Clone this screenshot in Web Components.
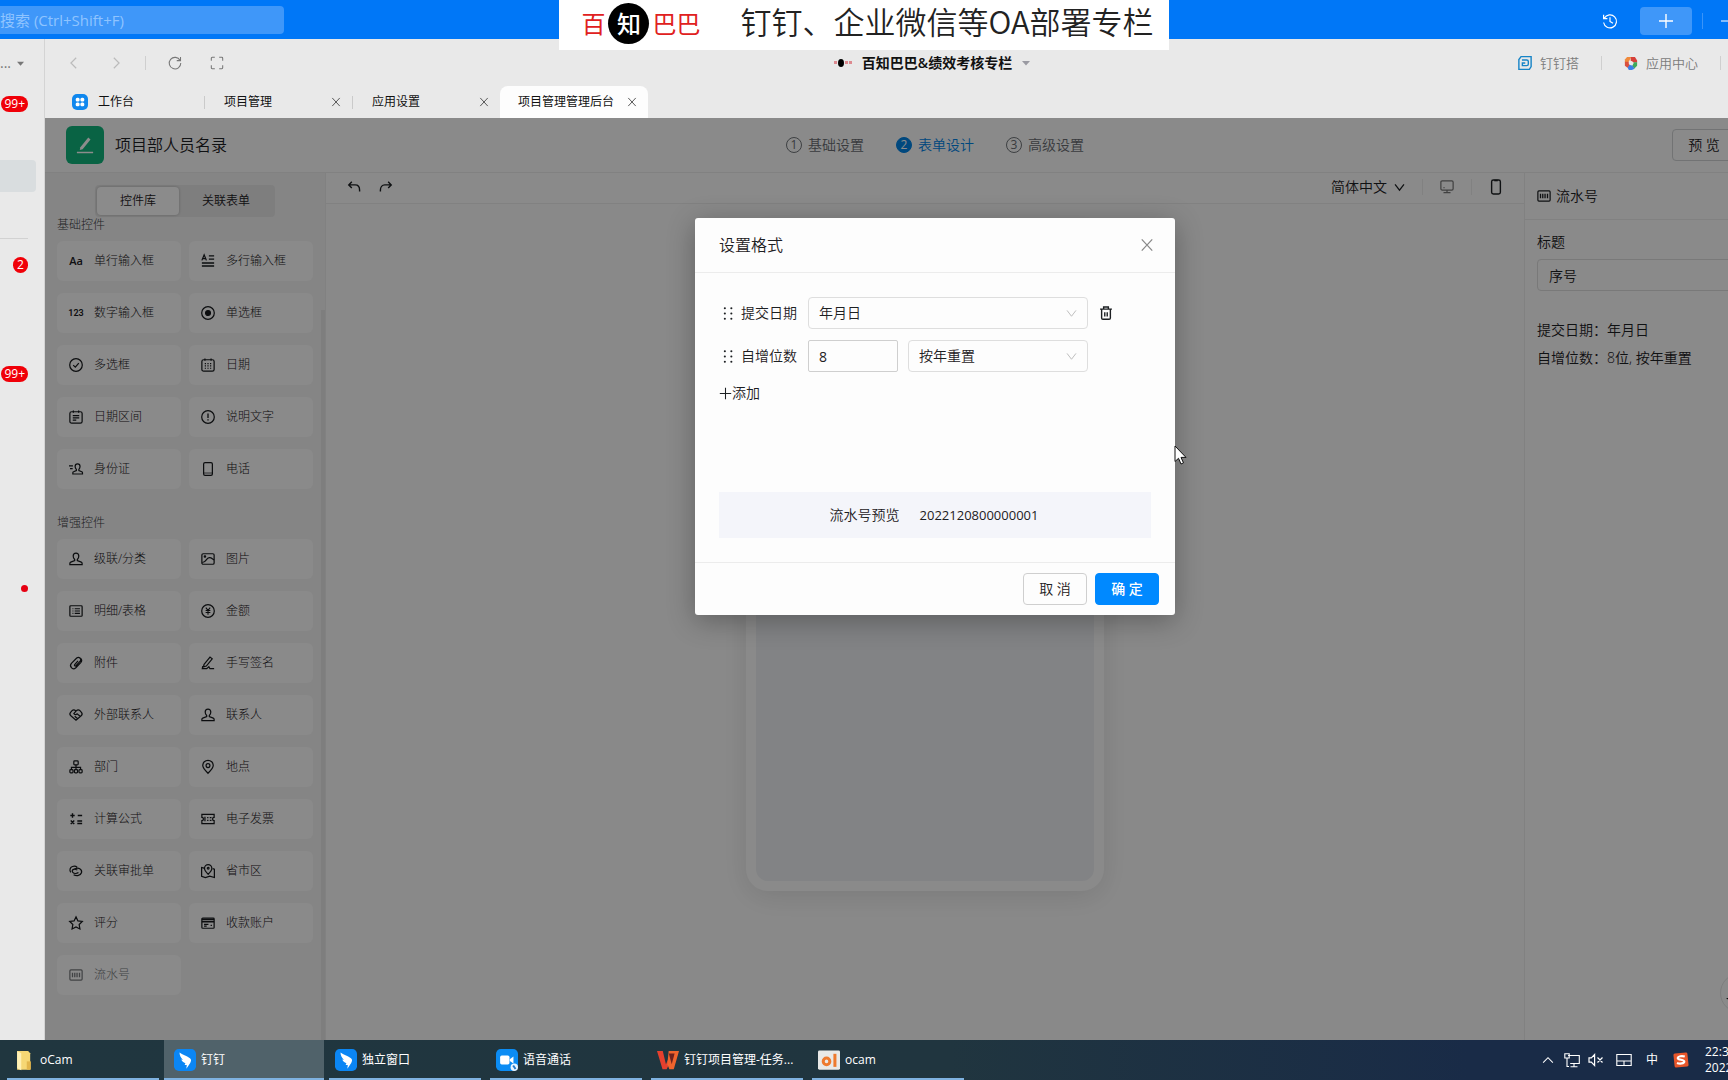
<!DOCTYPE html>
<html lang="zh-CN">
<head>
<meta charset="utf-8">
<title>项目管理管理后台</title>
<style>
html,body{margin:0;height:100%;overflow:hidden}
body{font-family:"Open Sans","Noto Sans CJK SC",sans-serif;font-size:14px;line-height:20px;color:#1d2023}
</style>
</head>
<body>
<app-shell></app-shell>
<script>
const BASE = `*,:host{box-sizing:border-box}button,input,select{font:inherit;color:inherit;margin:0;padding:0;border:0;background:none;outline:0}button{cursor:pointer}h1,h2,h3,p,ul{margin:0;padding:0;font:inherit;list-style:none}a{color:inherit;text-decoration:none}`;
function define(name, css, html) {
  customElements.define(name, class extends HTMLElement {
    constructor() {
      super();
      const t = document.createElement('template');
      t.innerHTML = `<style>${BASE}${css}</style>${typeof html === 'function' ? html(this) : html}`;
      this.attachShadow({mode: 'open'}).append(t.content.cloneNode(true));
    }
  });
}

const person = '<path d="M8 1.2c-2 0-3.2 1.4-3.2 3.4 0 1.7.7 3 1.7 4v1.2L2 11.6c-.7.3-1 .8-1 1.5v1.3h14v-1.3c0-.7-.3-1.2-1-1.5L9.500 9.800V8.600c1-1 1.700-2.300 1.700-4C11.200 2.600 10 1.200 8 1.200z"/>';
const serial = '<rect x="1" y="2.200" width="14" height="11.600" rx="1.200"/><path d="M4 5.500v5M6.600 5.500v5M9.200 5.500v5M12 5.500v5" stroke-width="1.500"/>';
const ICONS = {
  back:'<path d="M10.500 2l-6 6 6 6"/>',
  forward:'<path d="M5.500 2l6 6-6 6"/>',
  refresh:'<path d="M13.800 5A6.600 6.600 0 1 0 14.600 8M14.300 1v4.300H10"/>',
  expand:'<path d="M1.500 5.500v-3q0-1 1-1h3M10.500 1.500h3q1 0 1 1v3M14.500 10.500v3q0 1-1 1h-3M5.500 14.500h-3q-1 0-1-1v-3"/>',
  close:'<path d="M2 1.500l12 13M14 1.500l-12 13"/>',
  down:'<path d="M1.500 3.500L8 12l6.500-8.500"/>',
  up:'<path d="M1.500 11.500L8 5l6.500 6.500"/>',
  plus:'<path d="M8 1v14M1 8h14"/>',
  minus:'<path d="M1 8h14"/>',
  history:'<path d="M2.300 5.200A6.500 6.500 0 1 1 1.600 9.500M1.600 1.800v3.800h3.800M8 4.200v4.200l3 1.800"/>',
  undo:'<path d="M5.500 2L2 5.600l3.500 3.600M2.400 5.600h7c3 0 5 2.400 5 6v1.600"/>',
  redo:'<path d="M10.500 2L14 5.600l-3.500 3.600M13.600 5.600h-7c-3 0-5 2.400-5 6v1.600"/>',
  monitor:'<rect x="1" y="1" width="14" height="10.500" rx="1.500"/><path d="M8 11.500v2.800M4 14.500h8"/><path d="M4 8.800h1.200"/>',
  phone:'<rect x="3" y=".6" width="10" height="14.800" rx="1.600"/><path d="M3.300 12.600h9.400" stroke-width=".8"/>',
  mobile:'<rect x="3" y="0" width="10" height="16" rx="2"/><path d="M6 .6h4" stroke-width="1.800"/>',
  pen:'<path d="M4.300 9.800L10.600 2l1.800 1.500-6.300 7.800-2.300.7z" fill="currentColor" stroke="none"/><path d="M1.500 14h13" stroke-width="1.200"/>',
  serial,
  para:'<path d="M1 7.300L3.600 1l2.600 6.300M2 5.200h3.200M9 2.200h6M9 5.800h6"/><path d="M1 10.200h14M1 13.700h14" stroke-width="1.700"/>',
  radio:'<circle cx="8" cy="8" r="7.200"/><circle cx="8" cy="8" r="2.800" fill="currentColor"/>',
  check:'<circle cx="8" cy="8" r="7.200"/><path d="M4.800 8.200l2.400 2.300 4-4.700"/>',
  calendar:'<rect x="1" y="2" width="14" height="13" rx="2"/><path d="M4.500 .5v2.600M11.500 .5v2.600"/><path d="M4.300 6.400h1.400M7.300 6.400h1.400M10.300 6.400h1.400M4.300 9h1.400M7.300 9h1.400M10.300 9h1.400M4.300 11.700h1.400M7.300 11.700h1.400M10.300 11.700h1.400" stroke-width="1.200"/>',
  range:'<rect x="1" y="2" width="14" height="13" rx="2"/><path d="M5 .5v2.600M11 .5v2.600M4.300 6.500h7.400M4.300 9h7.400M4.300 11.600h4"/>',
  info:'<circle cx="8" cy="8" r="7.200"/><path d="M8 4v5M8 10.600v1.500" stroke-width="1.500"/>',
  idcard:'<path d="M0 4.500h4.500M1.200 7.500h3M9.800 2.200c-1.700 0-2.800 1.200-2.800 2.900 0 1.400.5 2.500 1.400 3.300v1.300l-3.200 1.400c-.5.200-.8.600-.8 1.200v1.400h11v-1.400c0-.6-.3-1-.8-1.200l-3.300-1.400V8.400c.8-.8 1.300-1.900 1.300-3.300 0-1.700-1.100-2.900-2.800-2.900z"/>',
  person,
  image:'<rect x="1" y="2" width="14" height="12" rx="1.500"/><path d="M1.500 12c5-.5 4-5 8-5.500 2.500-.2 3.500 1.500 5.500 2.500"/><circle cx="4.500" cy="5.200" r=".8" fill="currentColor"/>',
  list:'<rect x="1" y="2" width="14" height="12" rx="1"/><path d="M4 5.400h1M6.500 5.400h6M4 8h1M6.500 8h6M4 10.700h1M6.500 10.700h6" stroke-width="1.200"/>',
  money:'<circle cx="8" cy="8" r="7.200"/><path d="M5.500 4.200L8 7.300l2.500-3.100M5.300 7.500h5.400M5.300 9.700h5.400M8 7.300v5" stroke-width="1.200"/>',
  clip:'<path d="M10.300 5.500L6.500 9.800c-.8 1 .5 2.200 1.500 1.300l4.800-5.300c2-2.300-1.300-5.800-4-3.500L3 8.200c-3.300 3.500 1 8.500 4.800 5.200l5.600-5.900c1.200-1.400 1.200-3.500 0-4.700"/>',
  sign:'<path d="M3.500 9.500L10.300 1.200l2.500 2-6.700 8.300-3.300 1zM2 11.500L1.500 14.500h5l2.500-2.200 1.200 2.200H15"/>',
  shake:'<path d="M8 3.500C6 1.500 4.500 2 3.500 3L1.800 5C.8 6.200.7 7.500 1.800 8.600L8 14l6.200-5.400c1.100-1.100 1-2.400 0-3.600l-1.700-2c-1-1-2.500-1.500-4.500.5L5.500 6.300c.8 1.700 2.600 1.600 3.700.3l3.900 3.100M6.500 9.500l3.500 2.700"/>',
  org:'<rect x="5.500" y="1" width="5" height="4.500" rx="1"/><path d="M8 5.500v3M2.800 11V8.500h10.400V11M8 8.500V11"/><rect x="1" y="11" width="3.600" height="3.600" rx="1"/><rect x="6.200" y="11" width="3.600" height="3.600" rx="1"/><rect x="11.400" y="11" width="3.600" height="3.600" rx="1"/>',
  pin:'<path d="M8 15.200C4.300 11.500 2 9 2 6.300a6 6 0 0 1 12 0C14 9 11.700 11.500 8 15.200z"/><circle cx="8" cy="6.400" r="2.200"/>',
  calc:'<path d="M4 1.500v5M1.500 4h5M10 4h5M2 9.800l4 4M6 9.800l-4 4M9.500 10.300h5.500M9.500 13.200h5.500" stroke-width="1.600"/>',
  ticket:'<path d="M1 2.800h14v3.400a1.800 1.800 0 0 0 0 3.600v3.400H1V9.800a1.800 1.800 0 0 0 0-3.600z"/><path d="M4.500 5.500v5M7 6.500h1.500M7 9.500h1.500M10 6.500h2M10 9.500h2"/>',
  link:'<path d="M10.800 9.800c-1.800 1.400-5 1.500-6.500-.2-1.700-2 .4-4.300 2.700-3.600l2.500.8M5 6.500c1.800-1.600 5.300-2.300 7.300-1 3.800 2.400 2.200 7.200-2.300 7.700-2 .2-3.700-.4-4.700-1M2 9.500C.3 7 1 4 4 2.900c2-.7 4-.3 5.300.8"/>',
  map:'<path d="M3.500 4.800L.7 4v10l4.300 1.500 5-1.500 5.300 1.500V6l-2-.7"/><path d="M8.200 11.700C5.500 9.100 4 7.200 4 4.900a4.200 4.200 0 0 1 8.400 0c0 2.300-1.500 4.200-4.200 6.800z"/><circle cx="8.200" cy="4.800" r="1"/>',
  star:'<path d="M8 1l2.200 4.600 5 .7-3.600 3.500.9 5L8 12.400l-4.500 2.400.9-5L.8 6.300l5-.7z"/>',
  card:'<rect x="1" y="2.500" width="14" height="11.500" rx="1"/><path d="M1 4h14M1 6.500h14" stroke-width="1.700"/><path d="M3.500 9.500h5M3.500 11.600h3M11 10.800h1.500"/>',
  trash:'<path d="M1.200 3.600h13.600M5.300 3.500V1.200h5.400v2.300M3 3.600v10q0 1.500 1.500 1.500h7q1.500 0 1.500-1.500v-10M6.600 7v5M9.400 7v5"/>',
  grip:'<g fill="currentColor" stroke="none"><circle cx="3.500" cy="1.500" r="1.300"/><circle cx="11.500" cy="1.500" r="1.300"/><circle cx="3.500" cy="8" r="1.300"/><circle cx="11.500" cy="8" r="1.300"/><circle cx="3.500" cy="14.500" r="1.300"/><circle cx="11.500" cy="14.500" r="1.300"/></g>',
  caret:'<path d="M0 4h16L8 13z" fill="currentColor" stroke="none"/>',
  grid:'<rect width="16" height="16" rx="5" fill="#0f87ee" stroke="none"/><g fill="#fff" stroke="none"><rect x="3.700" y="3.700" width="3.900" height="3.900" rx="1.500"/><rect x="8.400" y="3.700" width="3.900" height="3.900" rx="1.500"/><rect x="3.700" y="8.400" width="3.900" height="3.900" rx="1.500"/><rect x="8.400" y="8.400" width="3.900" height="3.900" rx="1.500"/></g>',
  dingda:'<path d="M3.500 .7h11.500v11.300l-2 3.300H1V4z" stroke="#1684c7" stroke-width="1.600"/><path d="M4.500 4.500h5.500q1.800 0 1.800 1.800v2.900q0 1.800-1.800 1.800H5V8h3.300" stroke="#1684c7" stroke-width="1.600"/>',
  center:'<g stroke="none"><path d="M3.500 1h5L5 7H1V4z" fill="#f08a3c"/><path d="M8 1h4.500L15 5v2.500h-4L7.500 5z" fill="#d6403a"/><path d="M15 7v4l-3.500 3.500L9.500 11l1.800-4z" fill="#3fa95b"/><path d="M12 14.500L9 16H5.500L4 13l2-3.500L9.800 11z" fill="#3d7fe8"/><path d="M1 6.500h4L6.500 10 4 13.500 1 11z" fill="#d9503f"/><circle cx="8" cy="8.300" r="2.400" fill="#e9e9e9"/></g>',
  folder:'<path d="M3 1.500h8l1.500 1.500v12H3z" fill="#f6d774" stroke="none"/><path d="M3 1.500l3 1.500v12.500L3 14z" fill="#fff0b5" stroke="none"/><path d="M10 9h3v6h-3z" fill="#e3b64c" stroke="none"/>',
  ding:'<rect width="16" height="16" rx="3.500" fill="#0b86f4" stroke="none"/><path d="M4 2.600c2.200 1.600 5 2.200 7.600 4.200 1.200 1 .9 2.100.2 3.300L9 14.300l.3-2.600H7.700l.6-1.400c-1.500-.3-2.500-1.300-3-2.600l1.200.2C5 6.700 4 4.700 4 2.600z" fill="#fff" stroke="none"/>',
  video:'<rect width="16" height="16" rx="3.500" fill="#0b8cf4" stroke="none"/><rect x="3" y="4.800" width="6.800" height="6.400" rx="1.200" fill="#fff" stroke="none"/><path d="M10 7.400l2.700-2v5.200L10 8.800z" fill="#fff" stroke="none"/><circle cx="13.300" cy="13.300" r="2.700" fill="#e8f4ff" stroke="none"/><path d="M12.500 12l1.700 2.500" stroke="#2279c9"/>',
  wps:'<g stroke="none"><path d="M0 1.500h4.200l2.300 9.500L10 3.300l1 3.500-4 8H4z" fill="#e5402e"/><path d="M8.500 1.500H16l-3.800 13.300H9L7.500 11z" fill="#f0642d"/><path d="M12.800 3.300L10.700 11 8.600 3.300z" fill="#6e211d"/></g>',
  ocam:'<rect x="0" y="1" width="16" height="14" rx="1" fill="#e9e9e7" stroke="none"/><circle cx="6.200" cy="9" r="2.400" stroke="#ee7a2e" stroke-width="2.200"/><path d="M12.300 3.500v9.500" stroke="#ee7a2e" stroke-width="2.200"/>',
  net:'<path d="M4 3.500h11.300v8H6.200M10 11.500v3M6.500 14.700h7M.8 1.800h4.400V6H.8zM3 6v8.500h2" stroke-width="1.100"/>',
  mute:'<path d="M1 5.800h2.300L6.600 2.500v11L3.300 10.200H1zM9.500 5.500l5 5M14.500 5.500l-5 5" stroke-width="1.200"/>',
  pad:'<path d="M.8 2.500h14.400v11H.8zM.8 9h14.400M8 9v4.500" stroke-width="1.100"/>',
  sogou:'<rect x="1" y="1" width="14" height="14" rx="1.500" fill="#e8562a" stroke="none" transform="rotate(-6 8 8)"/><path d="M11.800 4.500c-3-.9-6.800-.2-7 1.500-.2 2.200 6.700 1.300 6.500 3.600-.2 2-4.500 2.500-7.300 1.300" stroke="#fff" stroke-width="2.200"/>'
};
define('ui-icon',
  ':host{display:inline-flex;flex:none;width:14px;height:14px}svg{display:block;width:100%;height:100%;overflow:visible}',
  el => `<svg viewBox="0 0 16 16" fill="none" stroke="currentColor" stroke-width="${el.getAttribute('weight') || 1.4}" aria-hidden="true">${ICONS[el.getAttribute('name')] || ''}</svg>`);

define('promo-banner', `
:host{display:flex;align-items:center;width:fit-content;height:50px;padding:0 15px 4px 22px;background:#fff;color:#222;font-family:"Noto Sans CJK SC",sans-serif}
.logo{display:flex;align-items:center;gap:3px;color:#e02020;font-size:24px;line-height:40px}
.seal{display:flex;align-items:center;justify-content:center;width:41px;height:41px;border-radius:50%;background:#000;color:#fff;font-weight:500}
.name{margin-left:40px;padding-bottom:4px;font-size:31px;line-height:46px;font-weight:350;white-space:nowrap}`,
`<span class="logo"><span>百</span><span class="seal">知</span><span>巴巴</span></span><span class="name">钉钉、企业微信等OA部署专栏</span>`);

define('title-bar', `
:host{display:flex;align-items:center;height:39px;padding-right:89px;background:#0077f7;color:#fff}
input{width:284px;height:28px;border-radius:0 4px 4px 0;background:#3f97f9;font-size:15px}
input::placeholder{color:#8fc4ff;opacity:1}
.right{display:flex;align-items:center;margin-left:auto;padding-top:2px}
.add{display:flex;align-items:center;justify-content:center;width:52px;height:28px;margin:0 10px 0 22px;border-radius:4px;background:#3f97f9}
i{width:1px;height:16px;margin-right:17px;background:#3a94f8}
ui-icon{width:16px;height:16px}`,
`<input type="text" aria-label="搜索" placeholder="搜索 (Ctrl+Shift+F)">
<div class="right"><ui-icon name="history" weight="1.200"></ui-icon><button class="add" aria-label="新建"><ui-icon name="plus"></ui-icon></button><i></i><ui-icon name="minus" weight="1"></ui-icon></div>`);

define('side-rail', `
:host{display:flex;flex:none;flex-direction:column;align-items:flex-end;width:45px;padding-right:16px;background:#e9e9e9;border-right:1px solid #d4d4d4;overflow:hidden}
.org{display:flex;align-items:center;gap:6px;height:48px;padding-right:4px;color:#777;line-height:16px}
ui-icon{width:7px;height:7px}
.badge{flex:none;min-width:15px;height:16px;padding:0 3px;border-radius:8px;background:#f00008;color:#fff;font-size:12px;line-height:16px;text-align:center}
.apps{margin-top:9px}
.todo{margin-top:18px}
.chats{margin-top:93px}
.selected{flex:none;align-self:stretch;height:32px;margin:48px -8px 0 0;border-radius:0 4px 4px 0;background:#d9dddf}
.rule{flex:none;align-self:stretch;height:1px;margin-top:46px;background:#d2d2d2}
.dot{flex:none;width:7px;height:7px;margin-top:203px;border-radius:50%;background:#e60012}`,
`<div class="org"><span>...</span><ui-icon name="caret"></ui-icon></div>
<span class="badge apps">99+</span><div class="selected"></div><div class="rule"></div>
<span class="badge todo">2</span><span class="badge chats">99+</span><span class="dot"></span>`);

define('window-nav', `
:host{display:grid;grid-template-columns:1fr auto 1fr;align-items:center;height:47px;background:#e9e9e9;color:#7b7b7b}
div{display:flex;align-items:center}
.tools{padding-left:22px;color:#777}
.tools button{display:flex;width:14px;height:14px}
.tools button[disabled]{color:#bbb}
i{width:1px;height:14px;background:#cfcfcf}
.title{gap:10px;padding-right:6px;color:#111;font-weight:600}
.mini{display:flex;align-items:center;gap:1px;width:18px}
.mini b{width:3px;height:3px;background:#dd8a90}.mini s{width:6px;height:8px;border-radius:50%;background:#000}
.title ui-icon{width:8px;height:8px;color:#9a9aa2}
.links{justify-content:flex-end;padding-right:104px;font-size:13px;font-weight:350}
.links a{display:flex;align-items:center;gap:8px}`,
`<div class="tools"><button disabled aria-label="后退"><ui-icon name="back"></ui-icon></button><button disabled aria-label="前进" style="margin-left:28px"><ui-icon name="forward"></ui-icon></button><i style="margin:0 22px"></i><button aria-label="刷新"><ui-icon name="refresh" weight="1.200"></ui-icon></button><button aria-label="全屏" style="margin-left:28px"><ui-icon name="expand" weight="1.200"></ui-icon></button></div>
<div class="title"><span class="mini"><b></b><s></s><b></b><b></b></span><span>百知巴巴&amp;绩效考核专栏</span><ui-icon name="caret"></ui-icon></div>
<div class="links"><a href="#"><ui-icon name="dingda"></ui-icon>钉钉搭</a><i style="margin:0 22px"></i><a href="#"><ui-icon name="center"></ui-icon>应用中心</a><i style="margin-left:22px"></i></div>`);

define('tab-item', `
:host{display:flex;align-items:center;flex:none;width:148px;height:32px;padding:0 11px 0 20px;font-size:12px;color:#111}
:host([home]){width:159px;padding-left:27px}
:host([active]){padding-left:18px;background:#fdfdfd;border-radius:8px 8px 0 0}
button{display:flex;margin-left:auto}
a{display:flex;align-items:center;gap:10px;white-space:nowrap}
button ui-icon{width:10px;height:10px;color:#444}
a ui-icon{width:16px;height:16px}`,
el => `<a href="#">${el.hasAttribute('home') ? '<ui-icon name="grid"></ui-icon>' : ''}<slot></slot></a>${el.hasAttribute('home') ? '' : '<button aria-label="关闭标签"><ui-icon name="close" weight="1.400"></ui-icon></button>'}`);

define('tab-strip', `
:host{display:flex;align-items:center;height:32px;background:#e9e9e9}
i{flex:none;width:1px;height:13px;margin-right:-1px;background:#cacaca}`,
`<tab-item home>工作台</tab-item><i></i><tab-item>项目管理</tab-item><i></i><tab-item>应用设置</tab-item><tab-item active>项目管理管理后台</tab-item>`);

define('form-header', `
:host{display:grid;grid-template-columns:1fr auto 1fr;align-items:center;flex:none;height:55px;background:#fbfbfb;border-bottom:1px solid #ececec}
.name{display:flex;align-items:center;gap:11px;padding-left:21px;font-size:16px}
.mark{display:flex;align-items:center;justify-content:center;width:38px;height:38px;border-radius:6px;background:#12b57c;color:#fff}
.mark ui-icon{width:20px;height:20px}
ol{display:flex;gap:32px;margin:0;padding:0;list-style:none;color:#686c71}
li{display:flex;align-items:center;gap:6px}
li span{width:16px;height:16px;border:1px solid #71757a;border-radius:50%;font-size:12px;font-weight:400;line-height:14px;text-align:center}
li.on{color:#0083e6}li.on span{border-color:#0083e6;background:#0083e6;color:#fff}
button{justify-self:end;width:64px;height:32px;margin-right:89px;border:1px solid #cfd1d3;border-radius:4px;white-space:nowrap}`,
`<div class="name"><span class="mark"><ui-icon name="pen"></ui-icon></span><h1>项目部人员名录</h1></div>
<ol><li><span>1</span>基础设置</li><li class="on"><span>2</span>表单设计</li><li><span>3</span>高级设置</li></ol>
<button>预 览</button>`);

define('palette-item', `
:host{display:block}
button{display:flex;align-items:center;gap:11px;width:100%;height:40px;padding-left:12px;border-radius:6px;background:#fbfbfb;font-size:12px;font-weight:300;color:#1c2024;text-align:left}
ui-icon{color:#16191c}
:host([used]) button{color:#777a7d}
:host([used]) ui-icon{color:#777a7d}
em{flex:none;width:14px;font-style:normal;font-size:11px;font-weight:600;line-height:14px;display:flex;justify-content:center;white-space:nowrap}
em.num{font-size:9px;font-family:Roboto,sans-serif}`,
el => {
  const k = el.getAttribute('icon');
  const icon = k === 'aa' ? '<em>Aa</em>' : k === '123' ? '<em class="num">123</em>' : `<ui-icon name="${k}"></ui-icon>`;
  return `<button${el.hasAttribute('used') ? ' disabled' : ''}>${icon}<slot></slot></button>`;
});

define('palette-group', `
:host{display:block}
h3{margin-bottom:8px;font-size:12px;line-height:16px;font-weight:300;color:#3c4044}
div{display:grid;grid-template-columns:1fr 1fr;gap:12px 8px}`,
el => `<h3>${el.getAttribute('heading')}</h3><div><slot></slot></div>`);

const group = items => items.map(([i, t, u]) => `<palette-item icon="${i}"${u ? ' used' : ''}>${t}</palette-item>`).join('');
define('control-palette', `
:host{position:relative;display:flex;flex:none;flex-direction:column;width:281px;padding:12px 12px 0;background:#f3f3f3;border-right:1px solid #ebebeb;overflow:hidden}
.seg{display:flex;align-self:center;height:32px;padding:2px;border-radius:4px;background:#e6e6e6}
.seg button{padding:0 23px;border-radius:4px;font-size:12px}
.seg .on{background:#fdfdfd;box-shadow:0 0 3px rgba(0,0,0,.25)}
palette-group+palette-group{margin-top:26px}
.thumb{position:absolute;right:0;top:137px;bottom:0;width:4px;background:#e5e5e5}`,
`<div class="seg"><button class="on">控件库</button><button>关联表单</button></div>
<palette-group heading="基础控件">${group([['aa','单行输入框'],['para','多行输入框'],['123','数字输入框'],['radio','单选框'],['check','多选框'],['calendar','日期'],['range','日期区间'],['info','说明文字'],['idcard','身份证'],['phone','电话']])}</palette-group>
<palette-group heading="增强控件">${group([['person','级联/分类'],['image','图片'],['list','明细/表格'],['money','金额'],['clip','附件'],['sign','手写签名'],['shake','外部联系人'],['person','联系人'],['org','部门'],['pin','地点'],['calc','计算公式'],['ticket','电子发票'],['link','关联审批单'],['map','省市区'],['star','评分'],['card','收款账户'],['serial','流水号',1]])}</palette-group>
<span class="thumb"></span>`);

define('pick-list', `
:host{display:grid;align-items:center;color:#1d2023}
select{grid-area:1/1;width:100%;height:100%;padding:0 10px;appearance:none;border:1px solid #dedede;border-radius:4px}
ui-icon{grid-area:1/1;justify-self:end;width:11px;height:11px;margin-right:11px;color:#bbb;pointer-events:none}
:host([plain]) select{border:0;padding:0}:host([plain]) ui-icon{margin-right:0;color:#1d2023}`,
el => `<select aria-label="${el.getAttribute('label')}"><option>${el.getAttribute('value')}</option></select><ui-icon name="down" weight="${el.hasAttribute('plain') ? 1.8 : 1.4}"></ui-icon>`);

define('design-canvas', `
:host{display:flex;flex:1;flex-direction:column;min-width:0;background:#fafafa}
.bar{display:flex;align-items:center;flex:none;height:31px;padding:0 21px 2px;background:#fbfbfb;border-bottom:1px solid #ececec}
.bar button{display:flex}
.bar pick-list{width:74px;height:28px;margin-left:auto}
i{width:1px;height:16px;margin:0 17px;background:#ebebeb}
.stage{display:flex;flex:1;justify-content:center;padding:24px 0 149px}
.phone{width:358px;border:10px solid #fbfbfb;border-radius:22px;background:#edeff2;box-shadow:0 6px 28px rgba(0,0,0,.1)}`,
`<div class="bar"><button aria-label="撤销"><ui-icon name="undo" weight="1.600"></ui-icon></button><button aria-label="重做" style="margin-left:18px"><ui-icon name="redo" weight="1.600"></ui-icon></button>
<pick-list plain label="语言" value="简体中文"></pick-list><i></i><button aria-label="电脑预览" style="color:#777"><ui-icon name="monitor"></ui-icon></button><i></i><button aria-label="手机预览"><ui-icon name="mobile" weight="1.600"></ui-icon></button></div>
<div class="stage"><div class="phone"></div></div>`);

define('property-panel', `
:host{display:flex;flex:none;flex-direction:column;width:301px;background:#fbfbfb;border-left:1px solid #ececec}
h2{display:flex;align-items:center;gap:5px;height:47px;padding-left:12px;border-bottom:1px solid #ececec}
.body{display:flex;flex-direction:column;padding:12px}
label{margin-bottom:7px}
input{height:32px;padding:0 11px;border:1px solid #dcdcdc;border-radius:4px;margin-bottom:25px}
p{line-height:28px}`,
`<h2><ui-icon name="serial"></ui-icon>流水号</h2>
<div class="body"><label for="t">标题</label><input id="t" type="text" value="序号"><p>提交日期：年月日</p><p>自增位数：8位, 按年重置</p></div>`);

define('format-dialog', `
:host{display:block;width:480px;height:fit-content;background:#fdfdfd;border-radius:3px;box-shadow:0 6px 28px rgba(0,0,0,.3);color:#1d2023}
header{display:flex;align-items:center;justify-content:space-between;height:55px;padding:0 21px 0 24px;border-bottom:1px solid #ececec}
h2{font-size:16px}
button{display:flex;align-items:center;justify-content:center}
header button{color:#888}
.body{padding:24px}
.rows{display:flex;flex-direction:column;gap:11px;min-height:195px}
.row{display:flex;align-items:center;height:32px;padding-left:3px}
.row label{margin:0 11px 0 6px}
.row>ui-icon{width:13px;height:13px}
.row button{margin-left:11px}
.wide{width:280px;height:32px}.half{width:180px;height:32px;margin-left:10px}
input{width:90px;height:32px;padding:0 10px;border:1px solid #cfcfcf;border-radius:2px;font-weight:400}
.add{align-self:flex-start}
.add ui-icon{width:13px;height:13px}
.preview{display:flex;align-items:center;justify-content:center;gap:20px;height:46px;padding-right:2px;background:#f4f5fa}
.preview output{font-size:13px;font-weight:400}
footer{display:flex;justify-content:flex-end;gap:8px;padding:10px 16px;border-top:1px solid #ececec}
footer button{width:64px;height:32px;border:1px solid #cfcfcf;border-radius:4px}
footer .ok{background:#0089ff;border-color:#0089ff;color:#fff;font-weight:500}`,
`<header><h2>设置格式</h2><button aria-label="关闭"><ui-icon name="close"></ui-icon></button></header>
<div class="body"><div class="rows">
<div class="row"><ui-icon name="grip"></ui-icon><label>提交日期</label><pick-list class="wide" label="提交日期" value="年月日"></pick-list><button aria-label="删除"><ui-icon name="trash" weight="1.600"></ui-icon></button></div>
<div class="row"><ui-icon name="grip"></ui-icon><label for="n">自增位数</label><input id="n" type="text" value="8"><pick-list class="half" label="重置周期" value="按年重置"></pick-list></div>
<button class="add"><ui-icon name="plus" weight="1.300"></ui-icon>添加</button></div>
<div class="preview"><span>流水号预览</span><output>2022120800000001</output></div></div>
<footer><button>取 消</button><button class="ok">确 定</button></footer>`);

define('form-page', `
:host{position:relative;display:flex;flex:1;flex-direction:column;min-height:0;font-weight:350}
.cols{display:flex;flex:1;min-height:0}
.mask{position:absolute;inset:0;display:flex;justify-content:center;padding-top:100px;background:rgba(0,0,0,.45)}
.help{position:absolute;right:65px;bottom:27px;display:flex;align-items:center;width:40px;height:40px;padding-left:5px;border-radius:50%;border:1px solid #e4e4e4;background:#fbfbfb}
.cursor{position:absolute;left:1129px;top:327px;width:13px;height:20px}`,
`<form-header></form-header>
<div class="cols"><control-palette></control-palette><design-canvas></design-canvas><property-panel></property-panel></div>
<button class="help" aria-label="帮助"><svg width="8" height="8" viewBox="0 0 8 8" style="margin-top:16px"><path d="M0 1l8 0v6z" fill="#111"/></svg></button>
<div class="mask"><format-dialog></format-dialog></div>
<svg class="cursor" viewBox="0 0 13 20"><path d="M1 1v15.500l3.500-3.200 2.500 5.700 2.500-1.100-2.500-5.500h5z" fill="#fff" stroke="#111"/></svg>`);

define('task-item', `
:host{display:flex;flex:none;width:161px;padding:0 2px 0 0}
a{display:flex;flex:1;align-items:center;gap:5px;min-width:0;padding:0 8px 0 10px;background:linear-gradient(#7fb2e0,#7fb2e0) 4px 100%/calc(100% - 7px) 2px no-repeat;white-space:nowrap}
:host([active]){padding:0 1px 0 0}
:host([active]) a{background:linear-gradient(#7fb2e0,#7fb2e0) 0 100%/100% 2px no-repeat,#50626a}
ui-icon{width:22px;height:22px}`,
el => `<a href="#"><ui-icon name="${el.getAttribute('icon')}"></ui-icon><slot></slot></a>`);

define('task-bar', `
:host{display:flex;flex:none;height:40px;padding-left:3px;background:linear-gradient(90deg,#20363f 0,#20353f 55%,#192b47 85%);color:#fff;font-size:12px;line-height:16px;overflow:hidden}
.tray{display:flex;align-items:center;margin-left:auto}
.tray ui-icon{width:16px;height:16px}
.clock{width:23px;margin-left:16px;white-space:nowrap}`,
`<task-item icon="folder">oCam</task-item><task-item icon="ding" active>钉钉</task-item><task-item icon="ding">独立窗口</task-item><task-item icon="video">语音通话</task-item><task-item icon="wps">钉钉项目管理-任务...</task-item><task-item icon="ocam">ocam</task-item>
<div class="tray"><ui-icon name="up" style="width:12px;height:12px"></ui-icon><ui-icon name="net" style="margin-left:10px"></ui-icon><ui-icon name="mute" style="margin-left:8px"></ui-icon><ui-icon name="pad" style="margin-left:12px"></ui-icon><span style="margin:0 15px 0 14px">中</span><ui-icon name="sogou"></ui-icon><div class="clock">22:3<br>2022</div></div>`);

define('app-shell', `
:host{position:relative;display:flex;flex-direction:column;height:100vh;overflow:hidden}
.window{display:flex;flex:1;flex-direction:column;width:calc(100% + 97px);min-height:0}
.content{display:flex;flex:1;min-height:0}
main{display:flex;flex:1;flex-direction:column;min-width:0}
promo-banner{position:absolute;top:0;left:0;right:0;margin:0 auto}`,
`<div class="window"><title-bar></title-bar><div class="content"><side-rail></side-rail><main><window-nav></window-nav><tab-strip></tab-strip><form-page></form-page></main></div></div>
<task-bar></task-bar><promo-banner></promo-banner>`);
</script>
</body>
</html>
